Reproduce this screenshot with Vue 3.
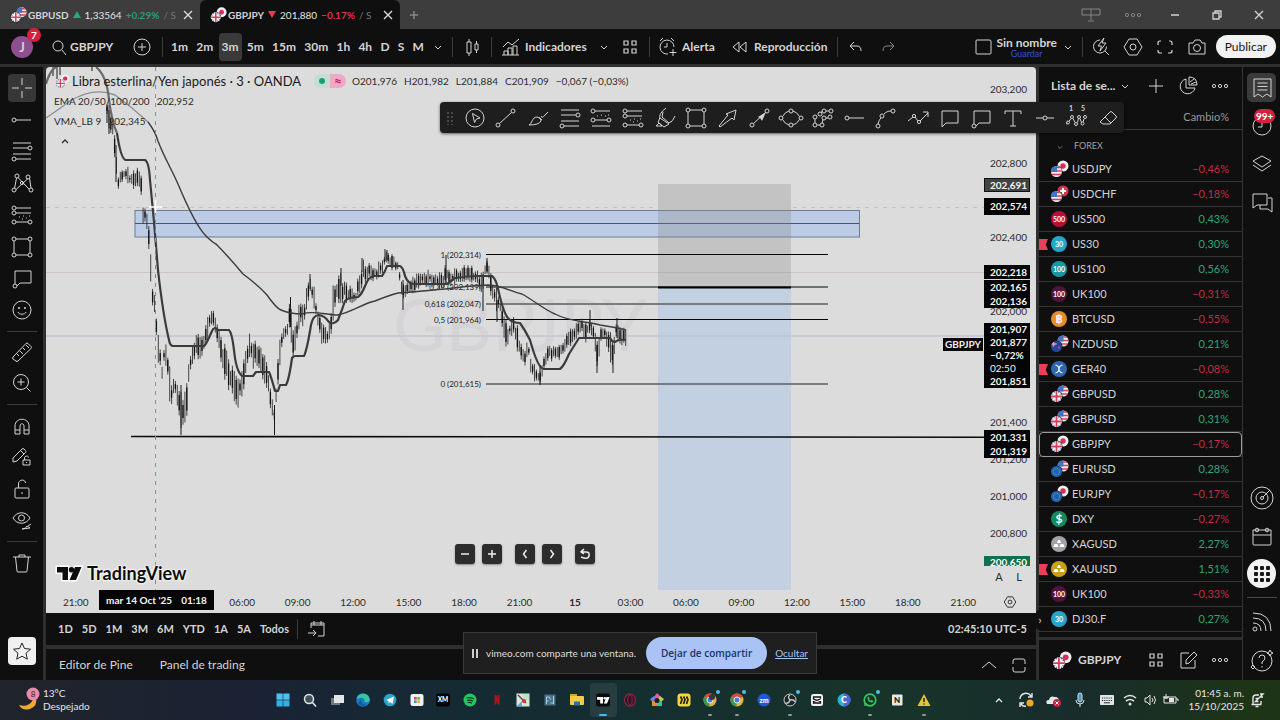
<script setup>
const circ = (x, y, r = 2) => `<circle cx="${x}" cy="${y}" r="${r}"/>`
const p = (d, extra = '') => `<path d="${d}" ${extra}/>`
const fillNow = 'fill="currentColor" stroke="none"'

const icons = {
  cross: p('M14 4v7M14 17v7M4 14h7M17 14h7'),
  hray: circ(6, 14) + p('M8 14h15'),
  hlineMid: circ(14, 14) + p('M5 14h7M16 14h7'),
  fib: p('M5 6h18M5 11h15M5 17h18M8 22h15') + circ(22, 11) + circ(6, 22),
  xabcd: p('M6.5 19.5 8.5 9M10 8.5 20 19M8 20.5 20 9.500M21.500 9l1.500 10M16 15l5 5') + circ(6, 21) + circ(9, 7) + circ(20, 8) + circ(23, 21) + circ(14, 14, 1.6),
  position: circ(6, 7) + circ(6, 12) + circ(6, 21) + circ(22, 21) + p('M8 7h15M8 12h15M8 21h12') + p('M11 16h1M15 15h1M18 17h1M21 15h1M14 18h1'),
  fibExt: circ(6, 7) + circ(6, 16) + circ(22, 16) + p('M8 7h15M8 16h12M5 22h18') + p('M10 12h1M14 11h1M18 12h1M21 11h1'),
  rect: circ(6, 6) + circ(22, 6) + circ(6, 22) + circ(22, 22) + p('M8 6h12M8 22h12M6 8v12M22 8v12'),
  callout: circ(7, 22) + p('M7 20V7h16v12H12l-3 3'),
  comment: p('M6 23V7h16v12H10z'),
  smile: circ(14, 14, 9) + p('M10 16c1 3 7 3 8 0') + `<circle cx="11" cy="12" r="1" ${fillNow}/><circle cx="17" cy="12" r="1" ${fillNow}/>`,
  ruler: p('M5 19 18 5.500q1-1 2 0l3 3q1 1 0 2L10 23q-1 1-2 0l-3-2q-1-1 0-2zM9 16l2 2M12 13l3 3M15 10l2 2M18 7l3 3'),
  zoom: circ(13, 13, 7.5) + p('M13 9.500v7M9.500 13h7M18.500 18.500l4 4'),
  magnet: p('M7 22v-8c0-9 14-9 14 0v8h-5v-8c0-3-4-3-4 0v8zM7 18h5M16 18h5'),
  pencilLock: p('M5 19V15L14 6q1-1 2 0l1.500 1.500q1 1 0 2L9 18zM13 8l3 3M15 17h7v5h-7zM16.500 17v-2c0-2.500 4-2.500 4-.500M18.500 19v1'),
  lock: p('M8 13h12q1 0 1 1v8q0 1-1 1H8q-1 0-1-1v-8q0-1 1-1zM10.500 13V9c0-5 7-5 7-1M14 17v2'),
  eye: p('M5 12c4-7 13-7 17 0c-4 7-13 7-17 0z') + circ(13.5, 12, 3) + p('M14 23q4 0 5-3l3 2zM20 20l3-2'),
  trash: p('M5 8h18M11 8V6h6v2M7.500 8l1.500 14q0 1 1 1h8q1 0 1-1L20.500 8'),
  star: p('M14 6l2.500 5.500 6 .700-4.500 4 1.300 6L14 19.200 8.700 22.200l1.300-6-4.500-4 6-.700z'),
  cursor: circ(14, 14, 9) + p('M11.500 9.500 19 14l-3.500 1-2 3.500z'),
  trend: circ(6, 21) + circ(21, 7) + p('M7.500 19.500 19.500 8.500'),
  brush: p('M5 21c3-1 3-8 8-8q5 1 4 4-2 4-12 4zM15 13.500l3 2.500M17 12q1 3 4-1l3-3'),
  hilite: p('M15 4Q7 10 9 15M20 18q1 0 4-6M9 14l9 6M9 14l-2 4 6 5 5-3M5 22l3-3 3 3zM12 8l-1 5 7 6 3-2'),
  arrowFat: p('M5 22l9-11-2-1 10-4-2 10-2-2-12 9z'),
  arrow: circ(6, 21) + circ(21, 7) + p('M7.500 19.500 19 9') + p('M12 13l8-5-4 9-1.500-2.500z', fillNow),
  ellipse: p('M5.500 12.500Q8 8 12 7M16 7q4 1 6.500 5.500M5.500 15.500Q8 20 12 21M16 21q4-1 6.500-5.500') + circ(14, 7) + circ(14, 21) + circ(4, 14) + circ(24, 14),
  poly: circ(6, 13) + circ(11, 10) + circ(15, 7) + circ(22, 7) + circ(21, 13) + circ(15, 14) + circ(13, 21) + circ(6, 21) + p('M6 15v4M8 21h3M13 19l1-3M17 7h3M17 14h2M11.500 8.500l2-1'),
  curve: circ(6, 22) + circ(10, 12) + circ(21, 7) + p('M6 20c1-3 1-4 3-6M12 10c2-2 4-3 7-3'),
  zigzag: p('M4 17l5-4M11 13l3 4M16 17l8-8M19 8h5v5') + circ(10, 12, 1.6) + circ(15, 18, 1.6),
  text: p('M6 10V7h16v3M14 7v15M11 22h6'),
  elliott: p('M4 20l1.500-1M7 17.500l2-3M11 14.500l2 4M15.500 18.500l1-4M18 14.500l1.500 4M21 18l1-3') + circ(6, 18.5, 1.5) + circ(10, 13, 1.5) + circ(14, 20, 1.5) + circ(17, 13, 1.5) + circ(20.5, 19.500, 1.5) + circ(23, 13, 1.5) +
    `<text x="7" y="7" font-size="7" font-weight="700" ${fillNow}>1</text><text x="19" y="7" font-size="7" font-weight="700" ${fillNow}>5</text>`,
  eraser: p('M6 18 16 8q1-1 2 0l4 4q1 1 0 2l-6 6H9l-3-2zM11 13l6 6'),
  search: circ(13, 13, 5) + p('M17 17l4 5'),
  plusCircle: circ(14, 14, 8) + p('M14 10v8M10 14h8'),
  down: p('M11 13l3 3 3-3'),
  up: p('M7 17l7-6 7 6'),
  upSmall: p('M11 16l3-3 3 3', 'stroke-width="1.300"'),
  candles: p('M9 9h4v11H9zM11 6v3M11 20v3M17 11h3v6h-3zM18.500 8v3M18.500 17v3'),
  indicators: p('M6 14l5-5 4 3 7-6M7 22v-4h4v4M11 22v-7h4v7M16 22v-9h4v9M5 22h17'),
  grid: p('M8 8h4v4H8zM16 8h4v4h-4zM8 16h4v4H8zM16 16h4v4h-4z', 'stroke-width="1.200"'),
  alarm: p('M20 14a7 7 0 1 0-6 7M13 10v4h-3M6 8l3-3M17 5l3 3M19 16v7M15.500 19.500h7'),
  rewind: p('M13 9v10l-6-5zM20 9v10l-6-5z'),
  undo: p('M12 9l-4 4 4 4M8 13h7q4 0 4 5'),
  redo: p('M16 9l4 4-4 4M20 13h-7q-4 0-4 5'),
  square: p('M8 7h12q2 0 2 1v12q0 1-1 1H8q-1 0-1-1V8q0-1 1-1z'),
  spark: p('M13 7a6.500 6.500 0 1 0 6.500 6.500M18 18l4 4') + p('M17 5l-6 8h3.500l-1.500 5 6-8h-4z'),
  hex: p('M10 6h8l5 8-5 8h-8l-5-8z') + circ(14, 14, 3),
  expand: p('M10 8H9q-2 0-2 2v2M18 8h1q2 0 2 2v2M21 17v1q0 2-2 2h-2M11 20H9q-2 0-2-2v-1', 'stroke-width="1.200"'),
  camera: p('M6 10h4l2-3h5l2 3h3v11H6z') + circ(14, 15, 3.5),
  plus: p('M14 7v14M7 14h14'),
  pie: p('M12 7a7.500 7.500 0 1 0 9 9h-9zM15 5v8h8q0-8-8-8zM16 10l4-3M17 12l5-2'),
  dots: circ(8, 14, 1.6) + circ(14, 14, 1.6) + circ(20, 14, 1.6),
  calRange: p('M8 13V8h13v13h-6M8 10h13M11 6v4M18 6v4M5 18h8M10 15l3 3-3 3'),
  maximize: p('M8 10q0-2 2-2h8q2 0 2 2v3M8 13v-3M20 16v3q0 2-2 2h-8q-2 0-2-2v-3'),
  list: p('M6 5h17v18l-4-3-4.500 3L10 20l-4 3zM9.500 9h10M9.500 12.500h10M9.500 16h10'),
  clock: circ(14, 14, 9) + p('M14 9v6h-4'),
  layers: p('M14 6l9 5-9 6-9-6zM5 15l9 6 9-6'),
  chat: p('M5 20V6h14v11H9zM20 10h4v14l-4-3h-8v-4'),
  target: circ(14, 14, 11) + circ(14, 14, 6) + circ(14, 14, 1.5) + p('M15 13l7-7'),
  calendar: p('M5 8h18v14q0 1-1 1H6q-1 0-1-1zM5 13h18') + circ(9, 8, 1.8) + circ(19, 8, 1.8),
  apps: [8, 14, 20].map(x => [8, 14, 20].map(y => `<rect x="${x - 2}" y="${y - 2}" width="4" height="4" rx="1" ${fillNow}/>`).join('')).join(''),
  feed: circ(7, 21) + p('M5 15q8 0 8 8M5 10q13 0 13 13M5 5q18 0 18 18'),
  help: circ(14, 15, 10) + p('M11 12q0-3 3-3t3 3q0 2-3 4v2M14 20v1.500M22 4l1 2 2 1-2 1-1 2-1-2-2-1 2-1zM5 19l2 2-2 2-2-2z'),
  edit: p('M15 7H7v15h14v-8M12 18v-4l8-8 3 3-8 8z'),
  close: p('M10 10l8 8M18 10l-8 8', 'stroke-width="1.300"'),
  minus: p('M10 14h8', 'stroke-width="1.500"'),
  plusSmall: p('M10 14h8M14 10v8', 'stroke-width="1.500"'),
  prev: p('M15.500 10l-3 4 3 4', 'stroke-width="1.500"'),
  next: p('M12.500 10l3 4-3 4', 'stroke-width="1.500"'),
  reset: p('M11 12h4q4 0 3 4t-8 1M13 9l-3 3 3 2', 'stroke-width="1.500"'),
  restore: p('M10 12h6v6h-6zM12 12v-2h6v6h-2', 'stroke-width="1.300"'),
  cast: p('M5 8h18v6H5zM14 8v11M11 20h6'),
  wifi: p('M8 12q6-5 12 0M10 15q4-3 8 0', 'stroke-width="1.600"') + `<circle cx="14" cy="18" r="1.500" ${fillNow}/>`,
  speaker: p('M9 12h2l3-3v10l-3-3H9zM16 12q2 2 0 4M18 10q3 4 0 8'),
  battery: p('M8 11h12v6H8zM20 13h2v2M10 8v5M8 10v2h4v-2') + p('M13 12h5v4h-5z', fillNow),
  mic: `<rect x="12" y="7" width="4" height="9" rx="2" fill="#5d93b8" stroke="#bfe3fb"/>` + p('M10 14q0 4 4 4t4-4M14 18v3'),
  keyboard: p('M7.500 9.500h13v9h-13z', 'fill="#dde5e4"') + p('M9 12h10M9 14.500h10', 'stroke="#26353a" stroke-dasharray="1.200 1"') + p('M11 16.800h6', 'stroke="#26353a"'),
  sync: p('M8 13a6 6 0 0 1 11-3M20 7v4h-4M8 21v-4h4M9 18q2 3 5 2', 'stroke-width="1.400"') + '<circle cx="18" cy="17" r="3.500" fill="#f5a524" stroke="none"/>',
  cloud: p('M8 18q-2-4 2-4 1-5 6-3 4 0 4 4v3z', 'fill="#e5e8ea" stroke="none"') + '<circle cx="18" cy="17" r="4" fill="#c7223c" stroke="none"/><path d="M16.500 15.500l3 3M19.500 15.500l-3 3" stroke="#fff"/>',
  bell: p('M16 9h-3q-3 0-3 3v6M8.500 18.500h10M18 15v3M12.500 20.500h3M12.500 12.500h3l-3 3h3M17 8h3l-3 3h3', 'stroke-width="1.400"')
}

let uid = 0
const flagArt = {
  us: '<rect width="12" height="12" fill="#eee"/><path d="M0 2h12M0 5.500h12M0 9h12" stroke="#d6405a" stroke-width="1.700"/><rect width="6.500" height="6.500" fill="#3c74c8"/>',
  gb: '<rect width="12" height="12" fill="#3a4fa0"/><path d="M0 0l12 12M12 0L0 12" stroke="#eee" stroke-width="1.800"/><path d="M6 0v12M0 6h12" stroke="#fff" stroke-width="4"/><path d="M6 0v12M0 6h12" stroke="#d3405c" stroke-width="1.800"/>',
  jp: '<rect width="12" height="12" fill="#f0eef0"/><circle cx="6" cy="6" r="2.700" fill="#d3305a"/>',
  ch: '<rect width="12" height="12" fill="#d33a52"/><path d="M6 3v6M3 6h6" stroke="#fff" stroke-width="2"/>',
  nz: '<rect width="12" height="12" fill="#24479a"/><path d="M3 1v5M1 3.500h5" stroke="#e8a0b0" stroke-width="1.500"/><circle cx="8.500" cy="7" r="1" fill="#e5506a"/>',
  eu: '<rect width="12" height="12" fill="#1f63b4"/><circle cx="6" cy="6" r="3.200" fill="none" stroke="#9fb38c" stroke-dasharray="1 1.500"/>'
}
const flag = (code, x, y) => {
  const id = 'fc' + uid++
  return `<g transform="translate(${x} ${y})"><clipPath id="${id}"><circle cx="6" cy="6" r="5.500"/></clipPath><g clip-path="url(#${id})">${flagArt[code]}</g></g>`
}
const pair = (a, b) => flag(b, 8, 1) + '<circle cx="7.500" cy="12.500" r="6" fill="#0f0f0f"/>' + flag(a, 1.5, 6.5)
const art = {
  tabUsd: pair('gb', 'us'), tabJpy: pair('gb', 'jp'), detail: pair('gb', 'jp'),
  title: flag('jp', 8, 1) + flag('gb', 2, 7)
}
const coin = (bg, label, size = 7) => `<circle cx="10" cy="10" r="8" fill="${bg}"/><text x="10" y="${size > 8 ? 14 : 12.500}" font-size="${size}" font-weight="700" text-anchor="middle" fill="#fff">${label}</text>`
const bars = bg => `<circle cx="10" cy="10" r="8" fill="${bg}"/><path d="M8 9l1-3h2l1 3zM4.500 13l1-3h3l1 3zM10.500 13l1-3h3l1 3z" fill="#fff"/>`

const symbols = [
  ['USDJPY', '−0,46%', pair('us', 'jp')],
  ['USDCHF', '−0,18%', pair('us', 'ch')],
  ['US500', '0,43%', coin('#b50f3b', '500')],
  ['US30', '0,30%', coin('#25a5c8', '30'), true],
  ['US100', '0,56%', coin('#1798a5', '100')],
  ['UK100', '−0,31%', coin('#561339', '100')],
  ['BTCUSD', '−0,55%', coin('#e48f27', '฿', 11)],
  ['NZDUSD', '0,21%', pair('nz', 'us')],
  ['GER40', '−0,08%', '<circle cx="10" cy="10" r="8" fill="#2f68ae"/><path d="M6.500 6q3.500 1 3.500 4t-3.500 4M13.500 6q-3.500 1-3.500 4t3.500 4" fill="none" stroke="#fff" stroke-width="1.200"/>', true],
  ['GBPUSD', '0,28%', pair('gb', 'us')],
  ['GBPUSD', '0,31%', pair('gb', 'us')],
  ['GBPJPY', '−0,17%', pair('gb', 'jp')],
  ['EURUSD', '0,28%', pair('eu', 'us')],
  ['EURJPY', '−0,17%', pair('eu', 'jp')],
  ['DXY', '−0,27%', coin('#168a5f', '$', 12)],
  ['XAGUSD', '2,27%', bars('#a2a2a7')],
  ['XAUUSD', '1,51%', bars('#c8a11b'), true],
  ['UK100', '−0,33%', coin('#561339', '100')],
  ['DJ30.F', '0,27%', coin('#25a5c8', '30')]
].map(([name, change, art, marked], i) => ({ name, change, art, marked, active: i === 11, down: change[0] === '−' }))

const intervals = ['1m', '2m', '3m', '5m', '15m', '30m', '1h', '4h', 'D', 'S', 'M']
const toolGroups = [
  ['cross', 'hray', 'fib', 'xabcd', 'position', 'rect', 'callout', 'smile'],
  ['ruler', 'zoom'],
  ['magnet', 'pencilLock', 'lock', 'eye'],
  ['trash']
]
const favourites = ['cursor', 'trend', 'brush', 'fib', 'fibExt', 'position', 'hilite', 'rect', 'arrowFat', 'arrow', 'ellipse', 'poly', 'hray', 'curve', 'zigzag', 'comment', 'callout', 'text', 'hlineMid', 'elliott', 'eraser']
const ranges = ['1D', '5D', '1M', '3M', '6M', 'YTD', '1A', '5A', 'Todos']
const times = ['21:00', '', '', '06:00', '09:00', '12:00', '15:00', '18:00', '21:00', '15', '03:00', '06:00', '09:00', '12:00', '15:00', '18:00', '21:00']

const axisTop = 67
const priceY = v => 89 - axisTop + (203.2 - v) * 185
const prices = [203.2, 202.8, 202.4, 202.0, 201.4, 201.2, 201.0, 200.8].map(v => ({ text: v.toFixed(3).replace('.', ','), y: priceY(v) }))
const tags = [
  { y: 178, lines: ['202,691'], kind: 'grey' },
  { y: 198, lines: ['202,574'], kind: 'tall' },
  { y: 265, lines: ['202,218'] },
  { y: 280, lines: ['202,165', '202,136'] },
  { y: 323, lines: ['201,907', '201,877', '−0,72%', '02:50', '201,851'], kind: 'stack' },
  { y: 430, lines: ['201,331', '201,319'] }
].map(t => ({ ...t, y: t.y - axisTop }))

const env = [
  [107, 98, 118], [109, 105, 134], [113, 120, 136], [116, 140, 180], [118, 178, 195], [120, 170, 190], [123, 166, 182], [126, 163, 184], [130, 168, 190], [134, 166, 193], [138, 164, 186], [141, 170, 192],
  [143, 200, 228], [146, 205, 230], [148, 212, 235], [150, 235, 285], [152, 285, 305], [155, 292, 318], [157, 330, 350], [159, 335, 370], [162, 360, 382], [165, 336, 362], [168, 356, 376], [170, 364, 420],
  [172, 380, 418], [174, 366, 390], [177, 380, 408], [179, 382, 414], [181, 380, 435], [184, 388, 427], [187, 380, 415], [189, 352, 385], [193, 342, 364], [197, 332, 360], [202, 335, 367], [206, 318, 350], [210, 306, 330],
  [214, 310, 328], [217, 322, 350], [221, 336, 365], [226, 346, 386], [230, 365, 396], [233, 362, 400], [237, 374, 410], [241, 374, 404], [244, 358, 392], [247, 342, 370], [250, 330, 360], [253, 342, 370], [258, 338, 370], [262, 350, 378],
  [267, 358, 394], [271, 390, 414], [274, 402, 432], [277, 370, 402], [280, 332, 367], [283, 322, 347], [287, 318, 344], [290, 298, 338], [294, 330, 368], [298, 305, 335], [304, 298, 328], [307, 282, 310], [310, 272, 295],
  [314, 284, 310], [318, 312, 332], [322, 318, 347], [327, 325, 348], [330, 315, 342], [333, 282, 322], [336, 276, 300], [341, 273, 307], [345, 280, 302], [350, 283, 310], [356, 288, 307], [359, 272, 302], [363, 258, 284], [370, 262, 282],
  [377, 264, 282], [382, 255, 277], [386, 248, 265], [391, 253, 270], [398, 260, 274], [402, 275, 302], [405, 284, 303], [409, 277, 299], [414, 276, 294], [420, 268, 290], [426, 270, 288], [432, 269, 288], [438, 272, 292], [444, 268, 290],
  [446, 258, 287], [450, 269, 288], [458, 268, 284], [464, 264, 284], [470, 264, 284], [476, 267, 288], [482, 272, 298], [485, 262, 280], [488, 258, 278], [491, 270, 300], [494, 282, 310], [498, 287, 314], [501, 298, 320], [504, 313, 348],
  [508, 322, 347], [513, 314, 334], [517, 322, 350], [521, 340, 367], [525, 347, 370], [528, 337, 354], [531, 358, 376], [536, 366, 384], [540, 370, 386], [543, 355, 376], [548, 343, 362], [554, 345, 362], [560, 342, 360], [566, 334, 356],
  [571, 325, 348], [577, 318, 340], [581, 315, 334], [586, 322, 345], [590, 312, 333], [593, 322, 340], [597, 338, 370], [601, 327, 347], [605, 322, 340], [609, 327, 357], [613, 340, 372], [616, 318, 345], [620, 325, 350], [626, 326, 346]
]
const rnd = n => { const s = Math.sin(n * 12.9898) * 43758.5453; return s - Math.floor(s) }
let wicks = ''
let bodies = ''
let seg = 0
for (let x = 107, n = 1; x <= 626; x += 1.9, n++) {
  while (seg < env.length - 2 && env[seg + 1][0] < x) seg++
  const [x0, t0, b0] = env[seg]
  const [x1, t1, b1] = env[seg + 1]
  const k = (x - x0) / (x1 - x0)
  const top = t0 + (t1 - t0) * k
  const bottom = b0 + (b1 - b0) * k
  const h = bottom - top
  const a = top + h * rnd(n) * 0.35
  const b = bottom - h * rnd(n + 500) * 0.35
  wicks += `M${x.toFixed(1)} ${a.toFixed(1)}V${b.toFixed(1)}`
  if (n % 2) bodies += `M${x.toFixed(1)} ${(a + h * 0.12).toFixed(1)}V${(b - h * 0.15).toFixed(1)}`
}
const spikes = 'M53 67v9M57 67v12M60 67v8M92 67v4M107 105v18M109 110v24M116 145v37M181 385v50M274.500 405v30M290.500 297v30M310 274v15M341 268v18M362 258v14M385 249v12M387 250v10M403 280v30M446 255v28M483 285v26M487 258v14M497 300v22M540 365v20M590 310v16M597 345v28M613 345v28M617 318v20'

const fibs = [
  [254.5, '1 (202,314)'], [287, '0,79 (202,139)'], [304, '0,618 (202,047)'], [319.5, '0,5 (201,964)'], [384, '0 (201,615)']
].map(([y, label], i) => ({ y, label, soft: i === 2 || i === 4 }))

const r = (x, y, w, h, f, rx = 0) => `<rect x="${x}" y="${y}" width="${w}" height="${h}" rx="${rx}" fill="${f}"/>`
const c = (x, y, rad, f, e = '') => `<circle cx="${x}" cy="${y}" r="${rad}" fill="${f}" ${e}/>`
const t = (s, size, f) => `<text x="8" y="${8 + size * 0.36}" font-size="${size}" font-weight="900" text-anchor="middle" fill="${f}">${s}</text>`
const tvMark = f => `<path d="M2 5h6v6.500H5.200V7.800H2zM11.500 5h3.200l-2.700 6.500H8.800z" fill="${f}"/><circle cx="9.800" cy="6.300" r="1.300" fill="${f}"/>`
const chromeArt = c(8, 8, 6.5, '#e4b43a') + '<path d="M8 8L2.400 4.800A6.500 6.500 0 0 1 13.700 4.800z" fill="#d8483c"/><path d="M8 8L2.400 4.800A6.500 6.500 0 0 0 7.500 14.500z" fill="#3a9a55"/>' + c(8, 8, 3, '#3f7fe0', 'stroke="#eee" stroke-width="1"')
const apps = [
  { n: 'Inicio', a: r(1.5, 1.5, 6.2, 6.2, '#4cc2f1') + r(8.3, 1.5, 6.2, 6.2, '#4cc2f1') + r(1.5, 8.3, 6.2, 6.2, '#35aee6') + r(8.3, 8.3, 6.2, 6.2, '#35aee6') },
  { n: 'Buscar', a: c(7, 7, 4.5, '#46525a', 'stroke="#dfe6e8" stroke-width="1.500"') + '<path d="M10.500 10.500l3.500 4" stroke="#dfe6e8" stroke-width="1.600"/>' },
  { n: 'Vistas', a: r(2, 6, 9, 7, '#72777a') + r(5, 3, 10, 8, '#e3e5e6') },
  { n: 'Edge', a: c(8, 8, 6.8, '#1c78c4') + '<path d="M1.500 7C3 0 13 0 14.800 7q0 4-4.800 3-1 0-.500-2.500-2-3-8-.500z" fill="#3ac6a0"/><path d="M6 8q0 5 6 5-5 3-9-2z" fill="#105a9c"/>' },
  { n: 'Telegram', a: c(8, 8, 6.3, '#2fa3c7') + '<path d="M4 8l8-3.500-1.500 7.500-2.500-2-1.500 1.500V9z" fill="#fff"/>' },
  { n: 'Store', a: r(1.5, 2, 13, 12, '#f1f1f1', 2) + r(5, 5, 2.7, 2.7, '#e0573a') + r(8.3, 5, 2.7, 2.7, '#7db343') + r(5, 8.3, 2.7, 2.7, '#3d9ad9') + r(8.3, 8.3, 2.7, 2.7, '#efb72f') },
  { n: 'XM', a: r(1, 1.5, 14, 13, '#050505', 2) + t('XM', 6.5, '#fff') },
  { n: 'Spotify', a: c(8, 8, 6.5, '#25c862') + '<path d="M4.500 6q4-1 7.500 1M5 8.500q3-1 6 .700M5.500 10.500q2.500-.500 4.500.700" stroke="#0c3a20" stroke-width="1.200" fill="none"/>' },
  { n: 'Netflix', a: '<path d="M5.500 3h2l1 4V3h2v10l-2-1-1-4v4l-2 1z" fill="#b3121c"/>' },
  { n: 'Paint', a: r(1.5, 1.5, 13, 13, '#d8e8d4') + r(8, 2, 6, 6, '#b9e3c2') + '<path d="M3 3l8 8" stroke="#8a2f50" stroke-width="1.500"/><path d="M2 14l5-5v5z" fill="#58a8e0"/>' + c(9, 9, 2, '#d0343c') },
  { n: 'Monitor', a: r(2.5, 2.5, 11, 11, '#49718a') + '<path d="M4.500 12V5h3l1 3M4.500 9h2M11.500 4v8M8.500 11h3" stroke="#a9cbdc" fill="none"/>' },
  { n: 'Explorador', a: r(1, 2, 7, 4, '#d9a520') + r(1, 4, 14, 9, '#f3cb4c', 1) + r(5, 9.500, 6, 4, '#2f6fa8') },
  { n: 'TradingView', on: true, a: r(1, 1.5, 14, 13, '#0b0b0b', 2) + tvMark('#fff') },
  { n: 'Opera', a: '<ellipse cx="8" cy="8" rx="5.500" ry="6" fill="#2c1a26" stroke="#8a2340" stroke-width="1.300"/><ellipse cx="8" cy="8" rx="2.200" ry="4.500" fill="none" stroke="#8a2340"/>' },
  { n: 'Copilot', a: '<path d="M8 1l4 4-4 3-3-3z" fill="#e85aa8"/><path d="M15 7l-4-3-3 4 3 3z" fill="#a9d84a"/><path d="M1 7l4-3 3 4-4 3z" fill="#6f7ff0"/><path d="M3 14V9l5-1v6z" fill="#e88a3a"/><path d="M13 14V9l-5-1v6z" fill="#3cbf9a"/>' + c(8, 8.5, 2.5, '#1a1f2e') },
  { n: 'Miro', a: r(1.5, 1.5, 13, 13, '#f4d73c', 3) + '<path d="M4.500 4.500l1.500 3-1.500 4.500M7.500 4.500L9 7.500 7.500 12M10.500 4.500l1.500 3-1.500 4.500" stroke="#222" stroke-width="1.700" fill="none"/>' },
  { n: 'Chrome', badge: true, run: true, a: chromeArt + c(10, 5, 3, '#3a3532') },
  { n: 'Chrome 2', badge: true, run: true, a: chromeArt },
  { n: 'Zoom', a: c(8, 8, 6.5, '#1f58d0') + t('zm', 7, '#fff') },
  { n: 'OBS', badge: true, run: true, a: c(8, 8, 6, '#20252b', 'stroke="#c9cdd0"') + '<path d="M8 8q-3-3 0-5M8 8q4-1 5 2M8 8q-1 4-5 3" stroke="#c9cdd0" stroke-width="1.300" fill="none"/>' },
  { n: 'CapCut', a: r(2, 2, 12, 12, '#f4f4f4', 2.5) + '<path d="M11.500 6.500V5h-7v2l7 2.500V11h-7V9.500l7-2.500" stroke="#111" stroke-width="1.300" fill="none"/>' },
  { n: 'Canva', a: c(8, 8, 6.5, '#2eb0d0') + '<path d="M8 1.500A6.500 6.500 0 0 1 8 14.500z" fill="#4b66dc"/>' + t('C', 9, '#fff') },
  { n: 'WhatsApp', badge: true, run: true, a: c(8, 8, 5.800, '#183527', 'stroke="#35c464" stroke-width="1.700"') + '<path d="M2 14l1-4 3 3zM5.500 5.500q0 5 5 5l1-1.500-2-1-1 .700-1.500-1.500.700-1-1-1.700z" fill="#35c464"/>' },
  { n: 'Notion', a: r(3, 2.500, 10.500, 11, '#e9e9e9', 1) + t('N', 8, '#1b1b1b') },
  { n: 'Aviso', run: true, a: '<path d="M8 2l6.500 12h-13z" fill="#e5c43b"/><path d="M8 6v4M8 11.500v1" stroke="#222" stroke-width="1.500"/>' }
]
</script>

<template>
  <div class="app">
    <header class="tabs">
      <div class="tab">
        <svg class="pair" viewBox="0 0 20 20" v-html="art.tabUsd"></svg>
        <b>GBPUSD</b><i class="tri up"></i><span>1,33564</span><strong class="green">+0.29%</strong><span class="fade">/ S</span>
        <button aria-label="Cerrar GBPUSD"><svg class="ic" viewBox="0 0 28 28" v-html="icons.close"></svg></button>
      </div>
      <div class="tab current">
        <svg class="pair" viewBox="0 0 20 20" v-html="art.tabJpy"></svg>
        <b>GBPJPY</b><i class="tri"></i><span>201,880</span><strong class="red">−0.17%</strong><span class="fade">/ S</span>
        <button aria-label="Cerrar GBPJPY"><svg class="ic" viewBox="0 0 28 28" v-html="icons.close"></svg></button>
      </div>
      <button class="dim add" aria-label="Nueva pestaña"><svg class="ic" viewBox="0 0 28 28" v-html="icons.plusSmall"></svg></button>
      <div class="window">
        <button class="dim" aria-label="Compartir"><svg class="ic" viewBox="0 0 28 28" v-html="icons.cast"></svg></button>
        <button class="dim" aria-label="Más"><svg class="ic" viewBox="0 0 28 28" v-html="icons.dots"></svg></button>
        <button aria-label="Minimizar"><svg class="ic" viewBox="0 0 28 28" v-html="icons.minus"></svg></button>
        <button aria-label="Restaurar"><svg class="ic" viewBox="0 0 28 28" v-html="icons.restore"></svg></button>
        <button aria-label="Cerrar"><svg class="ic" viewBox="0 0 28 28" v-html="icons.close"></svg></button>
      </div>
    </header>

    <nav class="toolbar">
      <button class="avatar">J<span class="count">7</span></button>
      <button class="symbol"><svg class="ic" viewBox="0 0 28 28" v-html="icons.search"></svg>GBPJPY</button>
      <button aria-label="Comparar"><svg class="ic" viewBox="0 0 28 28" v-html="icons.plusCircle"></svg></button>
      <span class="sep first"></span>
      <div class="intervals">
        <button v-for="i in intervals" :key="i" :class="{ on: i === '3m' }">{{ i }}</button>
      </div>
      <button class="chev" aria-label="Intervalos"><svg class="ic" viewBox="0 0 28 28" v-html="icons.down"></svg></button>
      <span class="sep"></span>
      <button class="mid" aria-label="Velas"><svg class="ic" viewBox="0 0 28 28" v-html="icons.candles"></svg></button>
      <span class="sep"></span>
      <button class="ind"><svg class="ic" viewBox="0 0 28 28" v-html="icons.indicators"></svg>Indicadores</button>
      <button class="chev" aria-label="Favoritos"><svg class="ic" viewBox="0 0 28 28" v-html="icons.down"></svg></button>
      <button aria-label="Plantillas"><svg class="ic" viewBox="0 0 28 28" v-html="icons.grid"></svg></button>
      <span class="sep tpl"></span>
      <button class="alert"><svg class="ic" viewBox="0 0 28 28" v-html="icons.alarm"></svg>Alerta</button>
      <button class="replay"><svg class="ic" viewBox="0 0 28 28" v-html="icons.rewind"></svg>Reproducción</button>
      <span class="sep"></span>
      <button class="undo" aria-label="Deshacer"><svg class="ic" viewBox="0 0 28 28" v-html="icons.undo"></svg></button>
      <button class="dim" aria-label="Rehacer"><svg class="ic" viewBox="0 0 28 28" v-html="icons.redo"></svg></button>
      <div class="right">
        <button aria-label="Diseño"><svg class="ic" viewBox="0 0 28 28" v-html="icons.square"></svg></button>
        <button class="layout"><span>Sin nombre</span><small>Guardar</small></button>
        <button class="chev" aria-label="Diseños"><svg class="ic" viewBox="0 0 28 28" v-html="icons.down"></svg></button>
        <span class="sep"></span>
        <div class="quick">
          <button v-for="n in ['spark', 'hex', 'expand', 'camera']" :key="n" :aria-label="n"><svg class="ic" viewBox="0 0 28 28" v-html="icons[n]"></svg></button>
        </div>
        <button class="publish">Publicar</button>
      </div>
    </nav>

    <main class="body">
      <aside class="tools">
        <div v-for="(g, gi) in toolGroups" :key="gi" class="group" :class="'g' + gi">
          <button v-for="n in g" :key="n" :class="{ on: n === 'cross' }" :aria-label="n"><svg class="ic" viewBox="0 0 28 28" v-html="icons[n]"></svg></button>
        </div>
        <button class="star" aria-label="Favoritos"><svg class="ic" viewBox="0 0 28 28" v-html="icons.star"></svg></button>
      </aside>

      <div class="center">
        <section class="chart">
          <div class="plot">
            <svg class="drawing" viewBox="46 67 938 523" preserveAspectRatio="xMinYMin slice">
              <text x="520" y="351" class="mark">GBPJPY</text>
              <path d="M46 272.500H984" stroke="#cbc5c8" />
              <path d="M46 336H984" stroke="#c4c5d4" stroke-width="1.500" />
              <rect x="135" y="210.500" width="724.500" height="26.500" fill="#bccbe6" stroke="#6d7c92" />
              <path d="M135 223.500H859" stroke="#465468" />
              <rect x="658" y="184" width="133" height="103" fill="#8c8c8c" fill-opacity=".3" />
              <rect x="658" y="287" width="133" height="303" fill="#a8c3e8" fill-opacity=".5" />
              <path v-for="f in fibs" :key="f.y" :d="`M486 ${f.y}H828`" :stroke="f.soft ? '#5c5c60' : '#060606'" :stroke-width="f.soft ? 1.6 : 1.2" />
              <path d="M658 287.500H791" stroke="#000" stroke-width="2" />
              <text v-for="f in fibs" :key="f.label" x="481" :y="f.y + 3" class="fib">{{ f.label }}</text>
              <path d="M131 436.500L984 437.200" stroke="#0a0a0a" stroke-width="1.600" />
              <path :d="wicks" stroke="#333" stroke-width=".9" />
              <path :d="bodies" stroke="#111" stroke-width="1.300" />
              <path :d="spikes" stroke="#181818" />
              <path d="M46 118Q58 110 70 101C85 92 100 89 115 95Q132 107 148 122" class="line soft" />
              <path d="M148 122Q155 131 158 141C164 157 170 166 178 184C188 208 198 228 206 236Q212 242 216 244C228 256 238 268 243 274Q258 285 267 295Q276 308 281 310C288 313 294 314 302 314C313 310 326 315 338 315C352 312 364 303 375 301Q390 295 398 293C420 292 430 290 445 289C460 287 470 286 488 285C500 285 510 291 522 294C536 302 545 310 555 314C570 322 585 321 600 325Q614 327 626 330" class="line" />
              <path d="M46 84Q50 70 56 67M96 67Q107 76 109 100Q112 123 117 133" class="line thick pale" />
              <path d="M117 133Q121 160 126 160H145Q149 162 150 180L154 222L158 270Q163 315 169 340Q170 346 173 346H204Q206 345 212 331Q214 326 218 330H229Q232 333 234 350Q236 371 242 376H253L256 372H269Q271 376 275 391H278L280 385H286Q289 380 292 358Q293 356 296 356H304Q307 350 311 325Q313 315 319 315Q325 316 328 321Q333 326 338 320Q342 310 345 301Q349 297 358 297Q362 294 365 286Q369 276 374 276H382Q385 272 387 266H400Q403 267 405 276Q408 284 414 284H447L455 278Q470 276 476 276H492Q496 278 499 293Q504 315 509 319Q513 323 520 323Q525 330 530 340Q538 369 544 369H560Q564 366 569 354L579 338H610Q612 342 615 342Q618 339 626 340" class="line thick" />
              <path d="M155.500 67V590" stroke="#7b9090" stroke-dasharray="4 5" />
              <path d="M46 207.500H984" stroke="#c2c2c2" stroke-dasharray="4 5" />
              <path d="M155.500 200V213M149 207H162" stroke="#fff" stroke-width="1.500" />
            </svg>
            <div class="legend">
              <div class="title">
                <svg class="pair" viewBox="0 0 20 20" v-html="art.title"></svg>
                <span class="name">Libra esterlina/Yen japonés · 3 · OANDA</span>
                <span class="status"><i class="dot"></i><i class="wave">≈</i></span>
                <span class="ohlc"><span>O201,976</span><span>H201,982</span><span>L201,884</span><span>C201,909</span><span>−0,067 (−0,03%)</span></span>
              </div>
              <p><span>EMA 20/50/100/200</span><span>202,952</span></p>
              <p><span>VMA_LB 9</span><span>202,345</span></p>
              <button aria-label="Ocultar leyenda"><svg class="ic" viewBox="0 0 28 28" v-html="icons.upSmall"></svg></button>
            </div>
            <div class="logo">
              <svg viewBox="0 0 26 15"><path d="M1 1h11v13H6.500V6.500H1zM19 1h6.500l-5.500 13h-6.500z" fill="#0d0d0d" stroke="#fff" stroke-width="3" paint-order="stroke" /><circle cx="15.500" cy="3.700" r="2.700" fill="#0d0d0d" /></svg>
              <span>TradingView</span>
            </div>
            <div class="nav">
              <button v-for="n in ['minus', 'plusSmall', 'prev', 'next', 'reset']" :key="n" :class="n" :aria-label="n"><svg class="ic" viewBox="0 0 28 28" v-html="icons[n]"></svg></button>
            </div>
            <span class="pill">GBPJPY</span>
          </div>
          <div class="prices">
            <span v-for="v in prices" :key="v.text" class="price" :style="{ top: v.y + 'px' }">{{ v.text }}</span>
            <div v-for="g in tags" :key="g.y" class="tag" :class="g.kind" :style="{ top: g.y + 'px' }">
              <span v-for="l in g.lines" :key="l" :class="{ thin: l === '02:50' }">{{ l }}</span>
            </div>
            <div class="target"><span>200,650</span></div>
            <div class="modes"><button>A</button><button>L</button></div>
          </div>
          <div class="timeaxis">
            <div class="times"><span v-for="(x, i) in times" :key="i" :class="{ day: x === '15' }">{{ x }}</span></div>
            <button aria-label="Ajustes"><svg class="ic" viewBox="0 0 28 28" v-html="icons.hex"></svg></button>
            <div class="cursor-time"><span>mar 14 Oct '25</span><span>01:18</span></div>
          </div>
        </section>
        <div class="ranges">
          <button v-for="x in ranges" :key="x">{{ x }}</button>
          <span class="sep"></span>
          <button class="cal" aria-label="Ir a la fecha"><svg class="ic" viewBox="0 0 28 28" v-html="icons.calRange"></svg></button>
          <button class="clock">02:45:10 UTC-5</button>
        </div>
        <div class="panels">
          <button>Editor de Pine</button>
          <button>Panel de trading</button>
          <div class="pright">
            <button aria-label="Abrir panel"><svg class="ic" viewBox="0 0 28 28" v-html="icons.up"></svg></button>
            <button aria-label="Maximizar"><svg class="ic" viewBox="0 0 28 28" v-html="icons.maximize"></svg></button>
          </div>
        </div>
      </div>

      <section class="watch">
        <div class="list">
          <div class="whead">
            <button class="wname">Lista de se...<svg class="ic" viewBox="0 0 28 28" v-html="icons.down"></svg></button>
            <div class="wacts">
              <button v-for="n in ['plus', 'pie', 'dots']" :key="n" :aria-label="n"><svg class="ic" viewBox="0 0 28 28" v-html="icons[n]"></svg></button>
            </div>
          </div>
          <table>
            <thead><tr><th></th><th>Cambio%</th></tr></thead>
            <tbody>
              <tr class="sect"><td colspan="2"><svg class="ic" viewBox="0 0 28 28" v-html="icons.down"></svg>FOREX</td></tr>
              <tr v-for="(s, i) in symbols" :key="i" :class="{ active: s.active }">
                <td><i v-if="s.marked" class="flagmark"></i><span class="sym"><svg viewBox="0 0 20 20" v-html="s.art"></svg>{{ s.name }}</span></td>
                <td :class="s.down ? 'down' : 'up'">{{ s.change }}</td>
              </tr>
            </tbody>
          </table>
          <button class="handle" aria-label="Plegar">›</button>
        </div>
        <div class="detail">
          <svg class="big" viewBox="0 0 20 20" v-html="art.detail"></svg><b>GBPJPY</b>
          <div class="wacts">
            <button v-for="n in ['grid', 'edit', 'dots']" :key="n" :aria-label="n"><svg class="ic" viewBox="0 0 28 28" v-html="icons[n]"></svg></button>
          </div>
        </div>
      </section>

      <aside class="rail">
        <div class="rg top">
          <button class="on" aria-label="Lista"><svg class="ic" viewBox="0 0 28 28" v-html="icons.list"></svg></button>
          <button aria-label="Alertas"><svg class="ic" viewBox="0 0 28 28" v-html="icons.clock"></svg><span class="count">99+</span></button>
          <button aria-label="Objetos"><svg class="ic" viewBox="0 0 28 28" v-html="icons.layers"></svg></button>
          <button aria-label="Chat"><svg class="ic" viewBox="0 0 28 28" v-html="icons.chat"></svg></button>
        </div>
        <div class="rg mid">
          <button aria-label="Screener"><svg class="ic" viewBox="0 0 28 28" v-html="icons.target"></svg></button>
          <button aria-label="Calendario"><svg class="ic" viewBox="0 0 28 28" v-html="icons.calendar"></svg></button>
          <button class="white" aria-label="Productos"><svg class="ic" viewBox="0 0 28 28" v-html="icons.apps"></svg></button>
        </div>
        <div class="rg low">
          <button aria-label="Noticias"><svg class="ic" viewBox="0 0 28 28" v-html="icons.feed"></svg></button>
          <button aria-label="Ayuda"><svg class="ic" viewBox="0 0 28 28" v-html="icons.help"></svg></button>
        </div>
      </aside>

      <div class="floating">
        <i class="grip"></i>
        <div class="favs">
          <button v-for="(n, i) in favourites" :key="i" :aria-label="n"><svg class="ic" viewBox="0 0 28 28" v-html="icons[n]"></svg></button>
        </div>
      </div>
    </main>

    <div class="share">
      <i class="pause"></i><span>vimeo.com comparte una ventana.</span>
      <button>Dejar de compartir</button>
      <a href="#">Ocultar</a>
    </div>

    <footer class="taskbar">
      <div class="weather">
        <svg viewBox="0 0 26 26"><path d="M20 10q2 9-6 12-8 2-11-4 9 3 14-5z" fill="#efa830" /><circle cx="17" cy="7" r="6.500" fill="#e98aa6" /><text x="17" y="10" font-size="8" text-anchor="middle" fill="#40202c">8</text></svg>
        <div>13°C<br />Despejado</div>
      </div>
      <div class="apps">
        <button v-for="a in apps" :key="a.n" :aria-label="a.n" :class="{ on: a.on, run: a.run, badge: a.badge }"><svg viewBox="0 0 16 16" v-html="a.a"></svg></button>
      </div>
      <div class="tray">
        <button v-for="n in ['upSmall', 'sync', 'cloud', 'mic', 'keyboard']" :key="n" :aria-label="n"><svg class="ic" viewBox="0 0 28 28" v-html="icons[n]"></svg></button>
        <button v-for="n in ['wifi', 'speaker', 'battery']" :key="n" class="sys" :aria-label="n"><svg class="ic" viewBox="0 0 28 28" v-html="icons[n]"></svg></button>
        <div class="now">01:45 a. m.<br />15/10/2025</div>
        <button class="sys" aria-label="Notificaciones"><svg class="ic" viewBox="0 0 28 28" v-html="icons.bell"></svg></button>
      </div>
    </footer>
  </div>
</template>

<style>
body { margin: 0; background: #0f0f0f; }
</style>

<style scoped>
.app { position: relative; display: flex; flex-direction: column; height: 100vh; min-height: 680px; overflow: hidden; background: #2f2f2f; color: #d4d4d4; font-family: Lato, "Open Sans", sans-serif; font-size: 12px; line-height: 16px; }
button { display: inline-flex; align-items: center; justify-content: center; padding: 0; border: 0; background: none; color: inherit; font: inherit; white-space: nowrap; }
.ic { display: block; flex: none; width: 28px; height: 28px; fill: none; stroke: currentColor; stroke-width: 1; }
.pair { flex: none; width: 18px; height: 18px; }
.dim { color: #858585; }
.sep { flex: none; width: 1px; height: 20px; background: #3c3c3c; }

.tabs { display: flex; flex: none; height: 29px; align-items: stretch; background: #3d3d3d; font-size: 10px; }
.tab { display: flex; box-sizing: border-box; width: 200px; padding-left: 9px; align-items: center; }
.tab b { margin: 0 4px 0 1px; }
.tab > span { margin: 0 4px; color: #e4e4e4; }
.tab > span.fade { flex: 1; margin-right: 0; color: #777; white-space: nowrap; }
.tab button { width: 24px; overflow: hidden; color: #ddd; }
.tab.current { background: #0f0f0f; border-radius: 6px 6px 0 0; }
.tri { border: 4px solid transparent; border-top: 0; border-bottom: 7px solid #22ab7c; }
.tri:not(.up) { border-bottom: 0; border-top: 7px solid #f23650; }
.green { color: #22a074; }
.red { color: #e0304c; }
.window { display: flex; margin-left: auto; gap: 14px; padding-right: 7px; align-items: center; }
.window button { width: 28px; }

.toolbar { display: flex; flex: none; height: 35px; align-items: center; background: #0f0f0f; font-weight: 700; }
.avatar { position: relative; width: 22px; height: 22px; margin-left: 11px; border-radius: 50%; background: #8d4f8f; font-size: 13px; font-weight: 700; }
.count { position: absolute; left: 16px; top: -8px; min-width: 14px; height: 14px; border-radius: 7px; background: #d5213f; color: #fff; font-size: 10px; line-height: 14px; text-align: center; }
.symbol { margin-left: 12px; margin-right: 15px; width: 68px; justify-content: flex-start; }
.symbol .ic { margin-right: -3px; }
.sep.first { margin: 0 5px 0 6px; }
.intervals { display: flex; width: 259px; justify-content: space-between; }
.intervals button { height: 28px; padding: 0 3px; border-radius: 4px; font-weight: 700; }
.intervals .on { background: #3a3a3a; }
.chev { width: 22px; overflow: hidden; }
.chev + .sep { margin-left: 3px; }
.mid { width: 38px; }
.ind { margin-left: 5px; width: 96px; justify-content: flex-start; }
.ind + .chev { margin-right: 1px; }
.sep.tpl { margin: 0 4px 0 5px; }
.alert { width: 68px; justify-content: flex-start; }
.replay { margin-left: 4px; margin-right: 9px; width: 102px; justify-content: flex-start; }
.undo { margin: 0 4px; }
.right { display: flex; margin-left: auto; align-items: center; }
.layout { flex-direction: column; width: 60px; }
.layout span { line-height: 13px; }
.layout small { color: #2f52e0; font-size: 9px; font-weight: 400; line-height: 9px; }
.quick { display: flex; margin: 0 5px 0 4px; gap: 4px; }
.publish { height: 23px; margin-right: 4px; padding: 0 9px; border-radius: 12px; background: #f2f2f2; color: #161616; font-weight: 400; }

.body { position: relative; display: flex; flex: 1; min-height: 0; gap: 3px; padding-top: 3px; }
.tools { display: flex; flex: none; flex-direction: column; width: 43px; align-items: center; background: #0f0f0f; }
.group { display: flex; box-sizing: content-box; width: 30px; flex-direction: column; justify-content: space-between; align-items: center; }
.group button { width: 28px; height: 28px; border-radius: 4px; }
.group .on { background: #373737; }
.g0 { height: 250px; padding: 7px 0; }
.g1 { height: 59px; padding: 6px 0 7px; }
.g2 { height: 122px; padding: 7px 0; }
.g3 { padding: 7px 0; }
.g1, .g2, .g3 { border-top: 1px solid #3a3a3a; }
.star { width: 28px; height: 28px; margin-top: auto; margin-bottom: 15px; border-radius: 4px; background: #f0f0f0; color: #222; }

.center { display: flex; flex: 1; flex-direction: column; min-width: 0; }
.chart { display: grid; flex: 1; min-height: 0; grid-template: minmax(0, 1fr) 23px / minmax(0, 1fr) 52px; overflow: hidden; border-radius: 4px 4px 0 0; background: #dcdcdc; color: #2c2c2c; font-size: 10px; }
.plot { position: relative; overflow: hidden; }
.drawing { display: block; width: 100%; height: 100%; }
.mark { fill: #d6d3d7; font-size: 72px; text-anchor: middle; }
.fib { font-size: 8px; text-anchor: end; fill: #222; }
.line { fill: none; stroke: #3b3b3b; stroke-width: 1.4; stroke-linejoin: round; }
.soft { stroke: #8f8f8f; }
.thick { stroke-width: 2.2; }
.pale { stroke: #6a6a6a; }
.legend { position: absolute; left: 8px; top: 4px; }
.legend p { display: flex; margin: 0; gap: 7px; line-height: 20px; }
.legend button { width: 22px; height: 20px; overflow: hidden; }
.title { display: flex; height: 20px; align-items: center; }
.name { width: 234px; color: #1b1b1b; font-size: 13px; white-space: nowrap; }
.title .pair { width: 16px; height: 16px; margin-right: 2px; }
.status { display: flex; width: 32px; height: 14px; margin: 0 6px 0 8px; overflow: hidden; border-radius: 7px; }
.status i { flex: 1; font-size: 14px; font-style: normal; line-height: 13px; text-align: center; }
.dot { background: #c3ded5; color: #14a070; }
.dot::before { content: ""; display: block; width: 6px; height: 6px; margin: 4px auto; border-radius: 50%; background: #17a171; }
.wave { background: #efa9c6; color: #c22567; font-weight: 700; }
.ohlc { display: flex; gap: 7px; white-space: nowrap; }
.logo { position: absolute; left: 10px; bottom: 6px; display: flex; gap: 5px; align-items: center; color: #0d0d0d; font-size: 18px; font-weight: 700; line-height: 22px; }
.logo svg { width: 26px; height: 15px; overflow: visible; }
.logo span { text-shadow: 0 0 2px #fff, 0 0 2px #fff, 0 0 3px #fff; }
.nav { position: absolute; left: 409px; bottom: 26px; display: flex; gap: 7px; }
.nav button { width: 20px; height: 20px; overflow: hidden; border-radius: 3px; background: #2d2d2d; color: #eee; box-shadow: 0 1px 2px #888; }
.nav .prev, .nav .reset { margin-left: 6px; }
.pill { position: absolute; right: 1px; top: 271px; padding: 0 2px; background: #080808; color: #f2f2f2; font-weight: 700; line-height: 13px; }
.prices { position: relative; overflow: hidden; }
.price { position: absolute; right: 9px; line-height: 14px; margin-top: -7px; }
.tag { position: absolute; left: 0; right: 6px; display: flex; flex-direction: column; padding-left: 6px; background: #050505; color: #f4f4f4; font-weight: 700; line-height: 14px; }
.tag.grey { box-sizing: border-box; height: 14px; border: 1px solid #111; padding-left: 5px; background: #434343; line-height: 12px; }
.tag.tall { padding-top: 1px; padding-bottom: 2px; }
.tag.stack { line-height: 13px; }
.tag .thin { font-weight: 400; line-height: 12px; }
.tag.stack span:last-child { line-height: 14px; }
.target { position: absolute; left: 0; right: 6px; bottom: 24px; height: 10px; overflow: hidden; padding-left: 6px; background: #11704e; color: #fff; font-weight: 700; line-height: 12px; }
.modes { position: absolute; left: 5px; bottom: 4px; display: flex; }
.modes button { width: 20px; height: 18px; font-size: 11px; }
.timeaxis { position: relative; grid-column: 1 / 3; display: flex; align-items: center; gap: 5px; padding: 0 12px 0 2px; }
.times { display: grid; flex: 1; grid-template-columns: repeat(17, 1fr); text-align: center; }
.day { font-weight: 700; }
.timeaxis button { width: 28px; height: 18px; }
.timeaxis button .ic { width: 18px; height: 18px; stroke-width: 1.5; }
.cursor-time { position: absolute; left: 53px; top: 0; display: flex; gap: 9px; padding: 0 7px; background: #050505; color: #f4f4f4; font-weight: 700; line-height: 20px; white-space: nowrap; }
.ranges { display: flex; flex: none; height: 32px; align-items: center; gap: 9px; padding: 0 9px 0 12px; background: #0f0f0f; font-size: 11px; font-weight: 700; }
.ranges .sep { margin-left: -1px; }
.ranges .cal { margin-left: -4px; }
.ranges .clock { margin-left: auto; }
.panels { display: flex; flex: none; height: 31px; margin-top: 4px; align-items: center; gap: 27px; padding: 0 3px 0 13px; background: #0f0f0f; }
.pright { display: flex; margin-left: auto; gap: 2px; }

.watch { position: relative; display: flex; flex: none; width: 203px; flex-direction: column; gap: 3px; }
.list { position: relative; flex: 1; min-height: 0; background: #0f0f0f; }
.whead { display: flex; height: 38px; align-items: center; justify-content: space-between; padding: 0 8px 0 12px; }
.wname { font-weight: 700; }
.wname .ic { margin-left: -4px; }
.wacts { display: flex; gap: 4px; margin-left: auto; }
table { width: 100%; border-collapse: collapse; table-layout: fixed; font-size: 11px; }
th { height: 24px; padding: 0 13px 0 0; border-bottom: 1px solid #3a3a3a; color: #9a9a9a; font-weight: 400; text-align: right; }
td { position: relative; height: 24px; padding: 0; border-bottom: 1px solid #353535; }
.sect td { height: 27px; box-sizing: border-box; padding: 7px 0 0 7px; border: 0; color: #a0a0a0; font-size: 9px; }
.sect .ic { display: inline-block; height: 20px; vertical-align: middle; }
.sym { display: flex; align-items: center; padding-left: 10px; gap: 3px; }
.sym svg { width: 20px; height: 20px; }
td.up, td.down { padding-right: 13px; text-align: right; }
td.up { color: #2ea577; }
td.down { color: #c22b46; }
.active { outline: 1px solid #9c9c9c; outline-offset: -1px; border-radius: 4px; }
.flagmark { position: absolute; left: 0; top: 7px; width: 9px; height: 11px; background: #e8405a; clip-path: polygon(0 0, 100% 0, 75% 50%, 100% 100%, 0 100%); }
.handle { position: absolute; left: -3px; bottom: 7px; width: 8px; height: 20px; border-radius: 4px; background: #0f0f0f; }
.detail { display: flex; flex: none; height: 40px; align-items: center; gap: 6px; padding: 0 8px 0 12px; background: #0f0f0f; }
.big { width: 21px; height: 21px; }

.rail { display: flex; box-sizing: border-box; flex: none; width: 38px; margin-left: -3px; flex-direction: column; align-items: center; border-left: 1px solid #353535; background: #0f0f0f; }
.rg { display: flex; flex-direction: column; width: 30px; align-items: center; }
.rg button { position: relative; width: 29px; height: 29px; border-radius: 5px; }
.rg .on { background: #3a3a3a; }
.top { gap: 9px; padding-top: 6px; }
.rail .mid { width: 30px; margin-top: auto; gap: 9px; padding-bottom: 9px; border-bottom: 1px solid #4a4a4a; }
.low { gap: 9px; padding: 9px 0 6px; }
.rg .white { border-radius: 50%; background: #f2f2f2; color: #181818; }
.rg .count { left: 7px; top: -2px; padding: 0 2px; font-weight: 700; }

.floating { position: absolute; left: 440px; top: 38px; z-index: 3; display: flex; height: 31px; align-items: center; border-radius: 4px; background: #1e1e1e; box-shadow: 0 1px 3px #00000090; }
.grip { width: 7px; height: 14px; margin: 0 6px; background: radial-gradient(circle, #4a4a4a 1px, transparent 1px) 0 0 / 4px 4px; }
.favs { display: grid; width: 665px; grid-template-columns: repeat(21, 1fr); }

.share { position: absolute; left: 50%; bottom: 46px; z-index: 4; display: flex; box-sizing: border-box; width: 354px; height: 42px; align-items: center; transform: translateX(-50%); padding: 0 8px; border: 1px solid #393939; background: #1f1f1f; color: #ddd; font-size: 10px; }
.pause { flex: none; width: 2px; height: 9px; margin-right: 8px; border: solid #ccc; border-width: 0 2px; }
.share span { flex: 1; white-space: nowrap; }
.share button { flex: none; width: 121px; height: 32px; border-radius: 16px; background: #a9c3f5; color: #1b3468; font-family: "Open Sans", sans-serif; font-size: 10px; font-weight: 600; }
.share a { margin-left: 8px; color: #a9c3f5; }

.taskbar { position: relative; display: flex; flex: none; height: 40px; align-items: center; justify-content: space-between; background: linear-gradient(90deg, #20242b 0, #1a2234 20%, #152a34 33%, #152e30 50%, #17342a 70%, #182c2c 84%, #1d3417 97%); color: #e6e6e6; font-size: 10px; line-height: 13px; }
.weather { display: flex; padding-left: 16px; gap: 1px; align-items: center; }
.weather svg { width: 26px; height: 26px; }
.apps { position: absolute; left: 270px; display: grid; width: 667px; grid-template-columns: repeat(25, 1fr); }
.apps button { position: relative; height: 34px; border-radius: 4px; }
.apps svg { width: 16px; height: 16px; overflow: visible; }
.apps .on { background: #ffffff14; }
.apps .on::after, .apps .run::after { content: ""; position: absolute; bottom: 1px; left: 50%; width: 4px; height: 2px; margin-left: -2px; border-radius: 1px; background: #8f9a9a; }
.apps .on::after { width: 8px; margin-left: -4px; background: #4db8ea; }
.apps .badge::before { content: ""; position: absolute; right: 4px; top: 7px; width: 4px; height: 4px; border-radius: 50%; background: #56bde8; }
.tray { display: flex; margin-left: auto; padding-right: 13px; align-items: center; }
.tray button { width: 27px; overflow: hidden; }
.tray .sys { width: 20px; }
.now { width: 64px; text-align: right; }
.now + .sys { margin-left: 3px; }
</style>
